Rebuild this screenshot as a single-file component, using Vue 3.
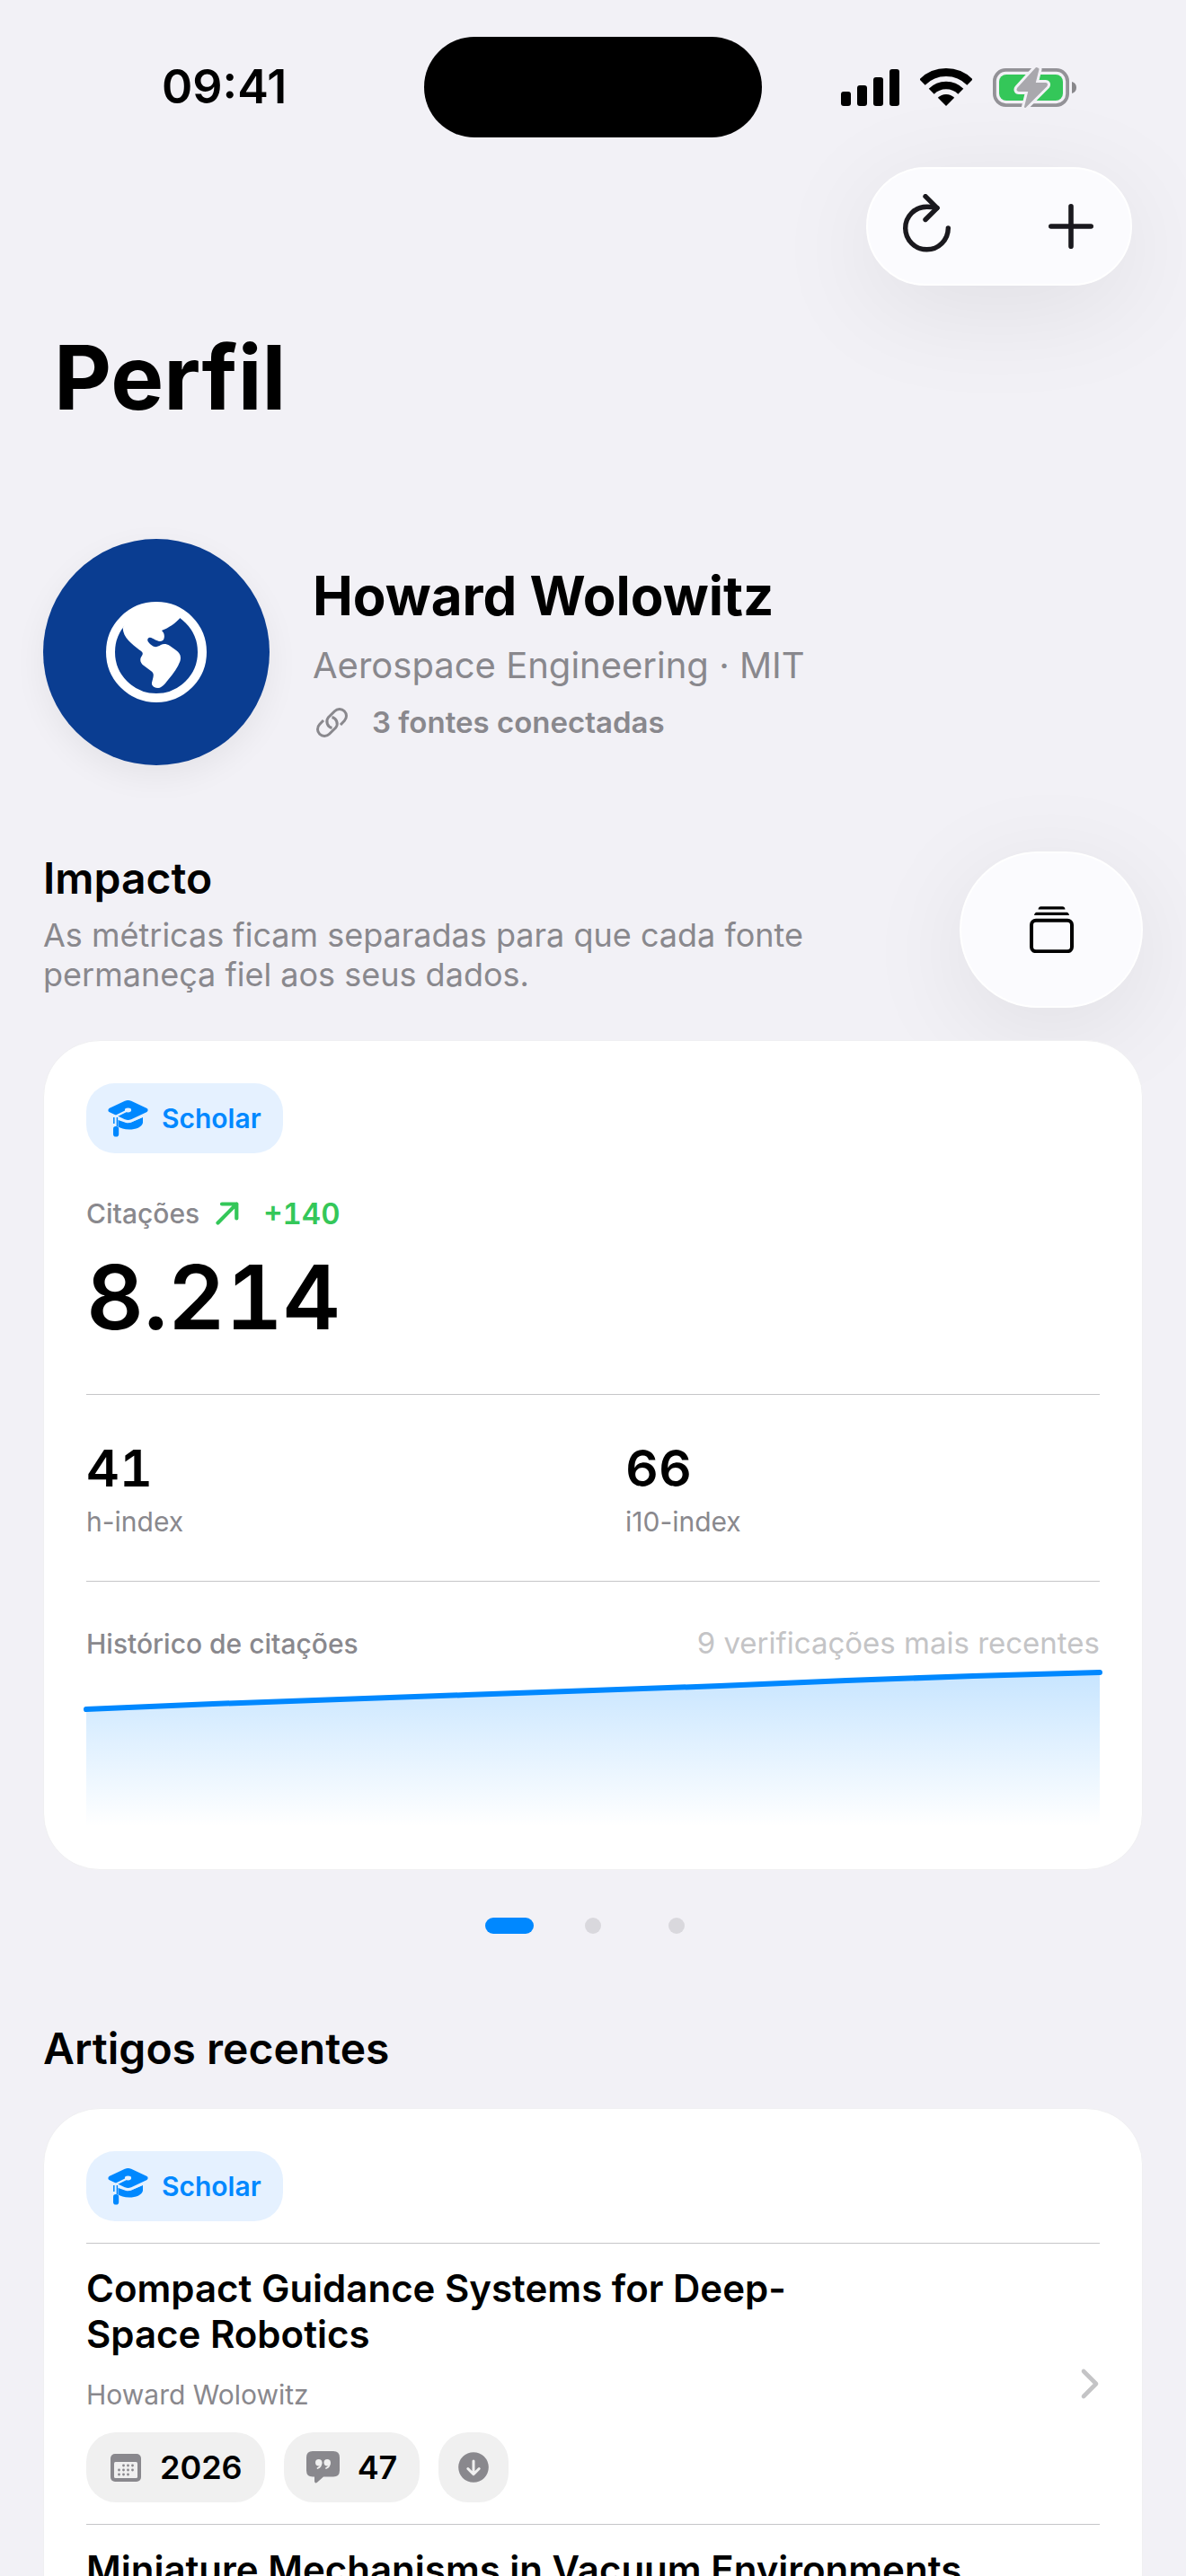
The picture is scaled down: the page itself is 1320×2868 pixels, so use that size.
<script setup>
import { computed, ref } from "vue";

const profile = {
  name: "Howard Wolowitz",
  field: "Aerospace Engineering · MIT",
  sources: "3 fontes conectadas",
};

const metrics = [
  { value: "41", label: "h-index" },
  { value: "66", label: "i10-index" },
];

const pages = ["Scholar", "Fonte 2", "Fonte 3"];
const activePage = ref(0);

const articles = [
  {
    title: "Compact Guidance Systems for Deep-\nSpace Robotics",
    author: "Howard Wolowitz",
    year: 2026,
    citations: 47,
  },
  { title: "Miniature Mechanisms in Vacuum Environments" },
];

// citation history, in chart units (1128 x 180)
const history = [
  [0, 49],
  [141, 43],
  [282, 38],
  [423, 33],
  [564, 28],
  [705, 23],
  [846, 17],
  [987, 12],
  [1128, 8],
];

const linePoints = computed(() => history.map((p) => p.join(",")).join(" "));
const areaPoints = computed(() => `0,180 ${linePoints.value} 1128,180`);

// calendar icon dots
const dots = [
  [14.5, 13], [19.5, 13], [24.5, 13],
  [9.5, 18], [14.5, 18], [19.5, 18], [24.5, 18],
  [9.5, 23], [14.5, 23], [19.5, 23],
];
</script>

<template>
  <div class="screen">
    <header class="status-bar">
      <span class="time">09:41</span>
      <div class="island"></div>
      <div class="indicators">
        <svg width="65" height="41" viewBox="0 0 65 41">
          <rect x="0" y="25" width="11" height="16" rx="3" />
          <rect x="18" y="18" width="11" height="23" rx="3" />
          <rect x="36" y="9" width="11" height="32" rx="3" />
          <rect x="54" y="0" width="11" height="41" rx="3" />
        </svg>
        <svg width="58" height="42" viewBox="0 0 58 42">
          <path d="M2.5 15.5A37.5 37.5 0 0 1 55.5 15.5" fill="none" stroke="#000" stroke-width="9" />
          <path d="M12.7 25.7A23 23 0 0 1 45.3 25.7" fill="none" stroke="#000" stroke-width="8.4" />
          <path d="M29 42L19.8 32.8A13 13 0 0 1 38.2 32.8Z" />
        </svg>
        <svg width="93" height="47" viewBox="0 -2 93 47">
          <rect x="1.9" y="1.9" width="81.2" height="39.2" rx="12.5" fill="none" stroke="#939297" stroke-width="3.8" />
          <rect x="7" y="7" width="71" height="29" rx="8" fill="#34c759" />
          <path d="M88 15C91.500 16 93 18.500 93 21.500S91.500 27 88 28Z" fill="#88878b" />
          <path
            d="M48.500 0L28 22.500C27 23.800 27.500 25 29 25H40.500L36 43L59.500 19.500C60.500 18 60 17 58.500 17H46.500L50.500 1Z"
            fill="#f2f1f6" stroke="#f2f1f6" stroke-width="8" stroke-linejoin="round"
          />
          <path
            d="M48.500 0L28 22.500C27 23.800 27.500 25 29 25H40.500L36 43L59.500 19.500C60.500 18 60 17 58.500 17H46.500L50.500 1Z"
            fill="#a9a8ad" stroke="#a9a8ad" stroke-width="2" stroke-linejoin="round"
          />
        </svg>
      </div>
    </header>

    <nav class="toolbar glass">
      <button type="button" aria-label="Atualizar">
        <svg width="54" height="72" viewBox="0 0 54 72" fill="none" stroke="#1a191e" stroke-width="5.4" stroke-linecap="round" stroke-linejoin="round">
          <path d="M50.300 38A23.800 23.800 0 1 1 26.500 14.200C31 14.200 35 14.800 38 15.600" />
          <path d="M25 2.700L38 15.600L25 28.500" />
        </svg>
      </button>
      <button type="button" aria-label="Adicionar">
        <svg width="50" height="50" viewBox="0 0 50 50" stroke="#1a191e" stroke-width="5.6" stroke-linecap="round">
          <path d="M25 2.800V47.200M2.800 25H47.200" />
        </svg>
      </button>
    </nav>

    <h1>Perfil</h1>

    <section class="profile">
      <div class="avatar">
        <svg width="112" height="112" viewBox="0 0 112 112">
          <circle cx="56" cy="56" r="51" fill="none" stroke="#fff" stroke-width="10" />
          <path
            fill="#fff"
            d="M18.700 29.300C19 40 29 47 37 53.500C40 55.500 42 57 40 60C37 64 38 68 42 71L50 77C53 79 53 81 52.500 84L51 90C50.500 94 54 96 58 96C62 96 66 91 69 87C75 80 80 73 82.500 66C84 60 82 57 78 54L71 49C67 46.500 64 46.500 61 48C57 50.500 54 51 51 48.500C47 45.500 45 43 47 40.500C49 38.500 52 41 55 42.500C59 44.500 63 45 64.500 41C65.500 37 64.500 34.500 62 32C70 29 77 24 82 18.500L85 12C70 1 42 1 27 12Z"
          />
        </svg>
      </div>
      <div class="profile-text">
        <h2 class="name">{{ profile.name }}</h2>
        <p class="field">{{ profile.field }}</p>
        <p class="sources">
          <svg width="42" height="36" viewBox="-4 -1 42 36" fill="none" stroke="#89888d" stroke-width="3">
            <path d="M27 20L31.300 15.500A7.400 7.400 0 0 0 20.500 4.800L13.200 12A7.400 7.400 0 0 0 17.500 23.500" />
            <path d="M8 15L3.700 19.500A7.400 7.400 0 0 0 14.500 30.200L21.800 23A7.400 7.400 0 0 0 17.500 11.500" />
          </svg>
          {{ profile.sources }}
        </p>
      </div>
    </section>

    <section class="impact">
      <div>
        <h2 class="heading">Impacto</h2>
        <p class="description">
          As métricas ficam separadas para que cada fonte permaneça fiel aos seus dados.
        </p>
      </div>
      <button type="button" class="stack-button glass" aria-label="Empilhar">
        <svg width="49" height="52" viewBox="0 0 49 52">
          <rect x="2" y="15.700" width="45" height="34.500" rx="5" fill="none" stroke="#000" stroke-width="4" />
          <path d="M5 10C5.500 7.500 6.500 6.700 8.500 6.700H40.500C42.500 6.700 43.500 7.500 44 10Z" />
          <path d="M9.500 3.600C9.800 1 10.800 .2 12.500 .2H36.500C38.200 .2 39.200 1 39.500 3.600Z" />
        </svg>
      </button>
    </section>

    <section class="card">
      <span class="chip">
        <svg width="45" height="41" viewBox="0 0 45 41">
          <path d="M3 11L20 3Q22.500 2 25 3L42 11L25 19Q22.500 20 20 19Z" fill="#08f" stroke="#08f" stroke-width="5" stroke-linejoin="round" />
          <path d="M11.500 20.500L20 24.500Q23 25.700 26 24.500L39 18.700V25C38 30 31 32.500 24 32.500C18 32.500 14 31 11.500 29.500Z" fill="#08f" />
          <path d="M9 20L20.500 24Q23 24.800 25.500 23.700L42 16.500" fill="none" stroke="#e5f1ff" stroke-width="2" />
          <path d="M22.500 11L9 17.700V29" fill="none" stroke="#e5f1ff" stroke-width="2.200" />
          <ellipse cx="22.500" cy="11" rx="3.600" ry="2.400" fill="#e5f1ff" />
          <path d="M6.800 19V26M10.400 19V29" stroke="#08f" stroke-width="1.500" />
          <rect x="6" y="29" width="6.200" height="11.500" rx="2.800" fill="#08f" />
        </svg>
        Scholar
      </span>

      <div class="citations">
        <span class="caption">Citações</span>
        <svg width="26" height="26" viewBox="0 0 26 26" fill="none" stroke="#34c759" stroke-width="4.200" stroke-linecap="round" stroke-linejoin="round">
          <path d="M2.500 23.500L23.300 2.500M7 2.500H23.300V18.500" />
        </svg>
        <span class="delta">+140</span>
      </div>
      <p class="total">8.214</p>

      <dl class="metrics">
        <div v-for="m in metrics" :key="m.label" class="metric">
          <dd>{{ m.value }}</dd>
          <dt>{{ m.label }}</dt>
        </div>
      </dl>

      <div class="history">
        <h3>Histórico de citações</h3>
        <span>9 verificações mais recentes</span>
      </div>
      <svg class="chart" viewBox="0 0 1128 180" preserveAspectRatio="none">
        <defs>
          <linearGradient id="area" gradientUnits="userSpaceOnUse" x1="0" y1="8" x2="0" y2="180">
            <stop offset="0" stop-color="#08f" stop-opacity="0.22" />
            <stop offset="1" stop-color="#08f" stop-opacity="0" />
          </linearGradient>
        </defs>
        <polygon :points="areaPoints" fill="url(#area)" />
        <polyline :points="linePoints" fill="none" stroke="#08f" stroke-width="6" stroke-linecap="round" stroke-linejoin="round" vector-effect="non-scaling-stroke" />
      </svg>
    </section>

    <div class="pager">
      <button
        v-for="(page, i) in pages"
        :key="page"
        type="button"
        :aria-label="page"
        :class="{ active: i === activePage }"
        @click="activePage = i"
      ></button>
    </div>

    <h2 class="heading articles-heading">Artigos recentes</h2>

    <section class="card">
      <span class="chip">
        <svg width="45" height="41" viewBox="0 0 45 41">
          <path d="M3 11L20 3Q22.500 2 25 3L42 11L25 19Q22.500 20 20 19Z" fill="#08f" stroke="#08f" stroke-width="5" stroke-linejoin="round" />
          <path d="M11.500 20.500L20 24.500Q23 25.700 26 24.500L39 18.700V25C38 30 31 32.500 24 32.500C18 32.500 14 31 11.500 29.500Z" fill="#08f" />
          <path d="M9 20L20.500 24Q23 24.800 25.500 23.700L42 16.500" fill="none" stroke="#e5f1ff" stroke-width="2" />
          <path d="M22.500 11L9 17.700V29" fill="none" stroke="#e5f1ff" stroke-width="2.200" />
          <ellipse cx="22.500" cy="11" rx="3.600" ry="2.400" fill="#e5f1ff" />
          <path d="M6.800 19V26M10.400 19V29" stroke="#08f" stroke-width="1.500" />
          <rect x="6" y="29" width="6.200" height="11.500" rx="2.800" fill="#08f" />
        </svg>
        Scholar
      </span>

      <article v-for="a in articles" :key="a.title" class="article">
        <div>
          <h3>{{ a.title }}</h3>
          <p v-if="a.author">{{ a.author }}</p>
          <div v-if="a.year" class="badges">
            <span class="badge">
              <svg width="38" height="31" viewBox="-2 0 38 31">
                <rect width="34" height="31" rx="5" fill="#89888d" />
                <rect x="4" y="9" width="26" height="18" rx="1.500" fill="#f0f0f0" />
                <circle v-for="d in dots" :key="d.join()" :cx="d[0]" :cy="d[1]" r="1.400" fill="#89888d" />
              </svg>
              {{ a.year }}
            </span>
            <span class="badge">
              <svg width="38" height="36" viewBox="0 0 38 36">
                <path d="M7 0H30Q37 0 37 7V21.500Q37 28.500 30 28.500H19L12 34.700Q9.500 36.500 9 33.500V28.500H7Q0 28.500 0 21.500V7Q0 0 7 0Z" fill="#89888d" />
                <g fill="#f0f0f0">
                  <circle cx="13.700" cy="12.700" r="3.700" />
                  <circle cx="23.200" cy="12.700" r="3.700" />
                </g>
                <g fill="none" stroke="#f0f0f0" stroke-width="1.800" stroke-linecap="round">
                  <path d="M16.500 13C16.500 16 15 18 12.500 19" />
                  <path d="M26 13C26 16 24.500 18 22 19" />
                </g>
              </svg>
              {{ a.citations }}
            </span>
            <button type="button" class="badge badge-icon" aria-label="Baixar">
              <svg width="34" height="34" viewBox="0 0 34 34">
                <circle cx="17" cy="17" r="16.800" fill="#89888d" />
                <path d="M17 10V24.500M10.800 18.500L17 24.700L23.200 18.500" fill="none" stroke="#f0f0f0" stroke-width="3" stroke-linecap="round" stroke-linejoin="round" />
              </svg>
            </button>
          </div>
        </div>
        <svg v-if="a.author" width="22" height="36" viewBox="0 0 22 36" fill="none" stroke="#c4c4c6" stroke-width="4.600" stroke-linecap="round" stroke-linejoin="round">
          <path d="M4 4L18 18L4 32" />
        </svg>
      </article>
    </section>
  </div>
</template>

<style>
body {
  margin: 0;
  background: #f2f1f6;
}
</style>

<style scoped>
.screen {
  height: 100vh;
  overflow: hidden;
  background: #f2f1f6;
  color: #000;
  font-family: Inter, "Liberation Sans", sans-serif;
}

h1,
h2,
h3,
p,
dl,
dd {
  margin: 0;
}

svg {
  flex: none;
}

button {
  border: 0;
  padding: 0;
  font: inherit;
}

.status-bar {
  display: grid;
  grid-template-columns: 1fr auto 1fr;
  align-items: center;
  padding-top: 41px;
}

.time {
  padding-left: 180px;
  font-size: 52px;
  line-height: 60px;
  font-weight: 600;
}

.island {
  width: 376px;
  height: 112px;
  border-radius: 56px;
  background: #000;
}

.indicators {
  display: flex;
  align-items: center;
  justify-content: flex-end;
  gap: 23px;
  padding-right: 122px;
}

/* floating translucent controls */
.glass {
  box-sizing: border-box;
  border: 2px solid #fff;
  background: #fbfbfe;
  box-shadow: 0 24px 120px rgba(0, 0, 0, 0.08);
}

.toolbar {
  display: flex;
  justify-content: space-between;
  width: 296px;
  height: 132px;
  margin: 33px 60px 0 auto;
  border-radius: 66px;
}

.toolbar button {
  display: grid;
  place-items: center;
  width: 132px;
  background: none;
}

h1 {
  margin: 42px 60px 0;
  font-size: 99px;
  line-height: 120px;
  font-weight: 700;
}

.profile {
  display: flex;
  align-items: center;
  gap: 48px;
  margin: 120px 48px 0;
}

.avatar {
  display: grid;
  place-items: center;
  width: 252px;
  height: 252px;
  border-radius: 50%;
  background: #0a3d91;
  box-shadow: 0 12px 36px rgba(0, 0, 0, 0.06);
}

.profile-text {
  display: grid;
  gap: 12px;
}

.name {
  font-size: 60px;
  line-height: 78px;
  font-weight: 700;
}

.field {
  font-size: 40px;
  line-height: 54px;
  color: #89888d;
}

.sources {
  display: flex;
  align-items: center;
  gap: 24px;
  font-size: 33px;
  line-height: 48px;
  font-weight: 600;
  color: #89888d;
}

.impact {
  display: flex;
  align-items: flex-start;
  justify-content: space-between;
  gap: 24px;
  margin: 96px 48px 36px;
}

.heading {
  font-size: 48px;
  line-height: 60px;
  font-weight: 600;
}

.description {
  margin-top: 11px;
  font-size: 36px;
  line-height: 44px;
  color: #89888d;
}

.stack-button {
  display: grid;
  flex: none;
  place-items: center;
  width: 204px;
  height: 174px;
  border-radius: 87px;
}

.card {
  position: relative;
  margin: 0 48px;
  padding: 47px;
  border: 1px solid #f0f0f2;
  border-radius: 63px;
  background: #fff;
}

.chip {
  display: flex;
  align-items: center;
  gap: 15px;
  box-sizing: border-box;
  width: fit-content;
  height: 78px;
  padding: 0 24px;
  border-radius: 32px;
  background: #e5f1ff;
  font-size: 30px;
  font-weight: 600;
  color: #08f;
}

.citations {
  display: flex;
  align-items: center;
  gap: 18px;
  margin-top: 46px;
  line-height: 42px;
}

.caption {
  font-size: 30px;
  font-weight: 500;
  color: #89888d;
}

.delta {
  margin-left: 9px;
  font-size: 33px;
  font-weight: 600;
  font-variant-numeric: tabular-nums;
  color: #34c759;
}

.total {
  margin-top: 18px;
  font-size: 99px;
  line-height: 108px;
  font-weight: 600;
  font-variant-numeric: tabular-nums;
}

.metrics {
  display: grid;
  grid-template-columns: 1fr 1fr;
  gap: 72px;
  margin: 54px 0 47px;
  padding: 48px 0;
  border-top: 1px solid #c6c6c8;
  border-bottom: 1px solid #c6c6c8;
}

.metric {
  display: flex;
  flex-direction: column;
}

.metric dd {
  font-size: 57px;
  line-height: 68px;
  font-weight: 600;
  font-variant-numeric: tabular-nums;
}

.metric dt {
  margin-top: 7px;
  font-size: 30px;
  line-height: 36px;
  color: #89888d;
}

.history {
  display: flex;
  align-items: baseline;
  justify-content: space-between;
  line-height: 42px;
}

.history h3 {
  font-size: 30px;
  font-weight: 500;
  color: #89888d;
}

.history span {
  font-size: 33px;
  color: #c4c4c6;
}

.chart {
  display: block;
  width: 100%;
  height: 180px;
  margin-top: 3px;
  overflow: visible;
}

.pager {
  display: flex;
  justify-content: center;
  gap: 75px;
  margin-top: 53px;
}

.pager button {
  width: 18px;
  height: 18px;
  border-radius: 9px;
  background: #d9d8dd;
}

.pager button.active {
  width: 54px;
  margin: 0 -18px;
  background: #08f;
}

.articles-heading {
  margin: 98px 48px 36px;
}

.article {
  display: flex;
  align-items: center;
  justify-content: space-between;
  margin-top: 24px;
  padding-top: 24px;
  border-top: 1px solid #c6c6c8;
}

.article h3 {
  font-size: 42px;
  line-height: 51px;
  font-weight: 600;
  white-space: pre-line;
}

.article p {
  margin: 24px 0;
  font-size: 30px;
  line-height: 36px;
  color: #89888d;
}

.badges {
  display: flex;
  gap: 21px;
}

.badge {
  display: flex;
  align-items: center;
  gap: 19px;
  box-sizing: border-box;
  height: 78px;
  padding: 0 25px;
  border-radius: 33px;
  background: #f0f0f0;
  font-size: 36px;
  font-weight: 600;
}

.badge-icon {
  justify-content: center;
  width: 78px;
  padding: 0;
}
</style>
